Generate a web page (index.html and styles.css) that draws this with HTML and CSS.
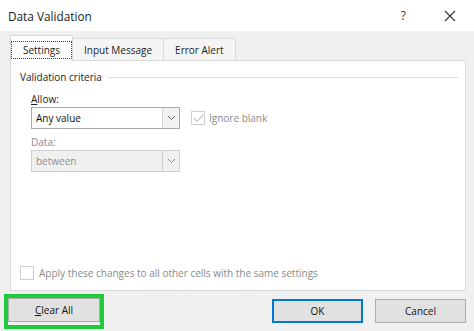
FILE: index.html
```html
<!DOCTYPE html>
<html>
<head>
<meta charset="utf-8">
<link rel="stylesheet" href="styles.css">
</head>
<body>
<div class="dialog">
  <div class="titlebar">
    <span class="title">Data Validation</span>
    <span class="help">?</span>
    <svg class="close" width="12" height="12" viewBox="0 0 12 12"><path d="M1 1L11 11M11 1L1 11" stroke="#333" stroke-width="1.1" fill="none"/></svg>
  </div>
  <div class="body">
    <div class="tabs">
      <div class="tab active"><span class="focus">Settings</span></div>
      <div class="tab">Input Message</div>
      <div class="tab">Error Alert</div>
    </div>
    <div class="panel">
      <div class="group-head"><span>Validation criteria</span><span class="rule"></span></div>
      <div class="field">
        <div class="label"><u>A</u>llow:</div>
        <div class="row">
          <div class="combo"><span class="value">Any value</span><span class="arrow"><svg width="9" height="6" viewBox="0 0 9 6"><path d="M1 1L4.5 4.5L8 1" stroke="#666" fill="none"/></svg></span></div>
          <div class="check disabled"><span class="box"><svg width="11" height="9" viewBox="0 0 11 9"><path d="M1 4.5L4 7.5L10 1" stroke="#c4c4c4" stroke-width="1.2" fill="none"/></svg></span><span class="check-label">Ignore blank</span></div>
        </div>
      </div>
      <div class="field data">
        <div class="label dim">Data:</div>
        <div class="combo disabled"><span class="value">between</span><span class="arrow"><svg width="9" height="6" viewBox="0 0 9 6"><path d="M1 1L4.5 4.5L8 1" stroke="#888" fill="none"/></svg></span></div>
      </div>
      <div class="apply"><span class="box"></span><span class="check-label">Apply these changes to all other cells with the same settings</span></div>
    </div>
    <div class="buttons">
      <div class="highlight"><button class="btn"><u>C</u>lear All</button></div>
      <div class="spacer"></div>
      <button class="btn default">OK</button>
      <button class="btn">Cancel</button>
    </div>
  </div>
</div>
</body>
</html>
```
FILE: styles.css
```css
* { box-sizing: border-box; }
html, body { margin: 0; padding: 0; }
body {
  width: 474px;
  height: 331px;
  font-family: "Open Sans", "Noto Sans", sans-serif;
  font-size: 10px;
  color: #1a1a1a;
  background: #f0f0f0;
  overflow: hidden;
}
.dialog {
  width: 474px;
  height: 331px;
  display: flex;
  flex-direction: column;
}
.titlebar {
  height: 31px;
  background: #fff;
  display: flex;
  align-items: center;
  padding: 0 0 0 8px;
}
.title {
  font-size: 11.8px;
  color: #222;
  flex: 1;
}
.help {
  font-size: 12px;
  color: #333;
  margin-right: 38px;
}
.close { margin-right: 18px; }
.body {
  flex: 1;
  display: flex;
  flex-direction: column;
  padding: 3px 8px 0 10px;
}
.tabs {
  display: flex;
  align-items: flex-end;
  height: 26px;
  position: relative;
  z-index: 1;
}
.tab {
  height: 22px;
  padding: 0 11px;
  border: 1px solid #d9d9d9;
  border-bottom: none;
  border-left: none;
  background: #f5f5f5;
  display: flex;
  align-items: center;
  color: #222;
}
.tab.active {
  background: #fff;
  border-left: 1px solid #d9d9d9;
  padding: 0;
  width: 63px;
  justify-content: center;
  margin-bottom: -1px;
  height: 26px;
}
.focus {
  border: 1px dotted #444;
  width: 61px;
  height: 18px;
  margin-top: 2px;
  display: flex;
  align-items: center;
  justify-content: center;
}
.panel {
  height: 231px;
  background: #fff;
  border: 1px solid #d9d9d9;
  display: flex;
  flex-direction: column;
  padding: 9px 7px 8px 9px;
}
.group-head {
  display: flex;
  align-items: center;
  gap: 6px;
  color: #222;
}
.rule {
  flex: 1;
  height: 1px;
  background: #dcdcdc;
  margin-top: 1px;
}
.field { padding-left: 11px; }
.label {
  margin-top: 7px;
  height: 16px;
  line-height: 16px;
  color: #222;
}
.label.dim { color: #8a8a8a; margin-top: 5px; }
.row {
  display: flex;
  align-items: center;
}
.combo {
  width: 149px;
  height: 22px;
  border: 1px solid #a9a9a9;
  display: flex;
  align-items: center;
  background: #fff;
}
.combo .value {
  flex: 1;
  padding-left: 4px;
  color: #111;
}
.combo .arrow {
  width: 17px;
  height: 20px;
  border-left: 1px solid #d4d4d4;
  background: #f2f2f2;
  display: flex;
  align-items: center;
  justify-content: center;
}
.combo.disabled {
  background: #f0f0f0;
  border-color: #cfcfcf;
}
.combo.disabled .value { color: #8f8f8f; }
.combo.disabled .arrow { background: #f0f0f0; border-left-color: #cfcfcf; }
.check {
  display: flex;
  align-items: center;
  margin-left: 11px;
}
.box {
  width: 14px;
  height: 14px;
  border: 1px solid #cfcfcf;
  background: #fff;
  display: flex;
  align-items: center;
  justify-content: center;
}
.check-label {
  margin-left: 4px;
  color: #8a8a8a;
}
.apply {
  margin-top: auto;
  display: flex;
  align-items: center;
  margin-bottom: 2px;
}
.apply .check-label { margin-left: 5px; }
.buttons {
  display: flex;
  align-items: center;
  height: 39px;
  padding-top: 1px;
}
.highlight {
  border: 4px solid #1fcb3c;
  margin-left: -6px;
}
.btn {
  font-family: "Open Sans", "Noto Sans", sans-serif;
  font-size: 10px;
  color: #111;
  width: 91px;
  height: 24px;
  background: #e1e1e1;
  border: 1px solid #adadad;
  margin: 0;
  padding: 0;
}
.highlight .btn { margin: 0 0 3px 0; width: 92px; vertical-align: top; display: block; }
.spacer { flex: 1; }
.btn.default {
  border: 2px solid #0078d7;
  margin-right: 12px;
}
```
